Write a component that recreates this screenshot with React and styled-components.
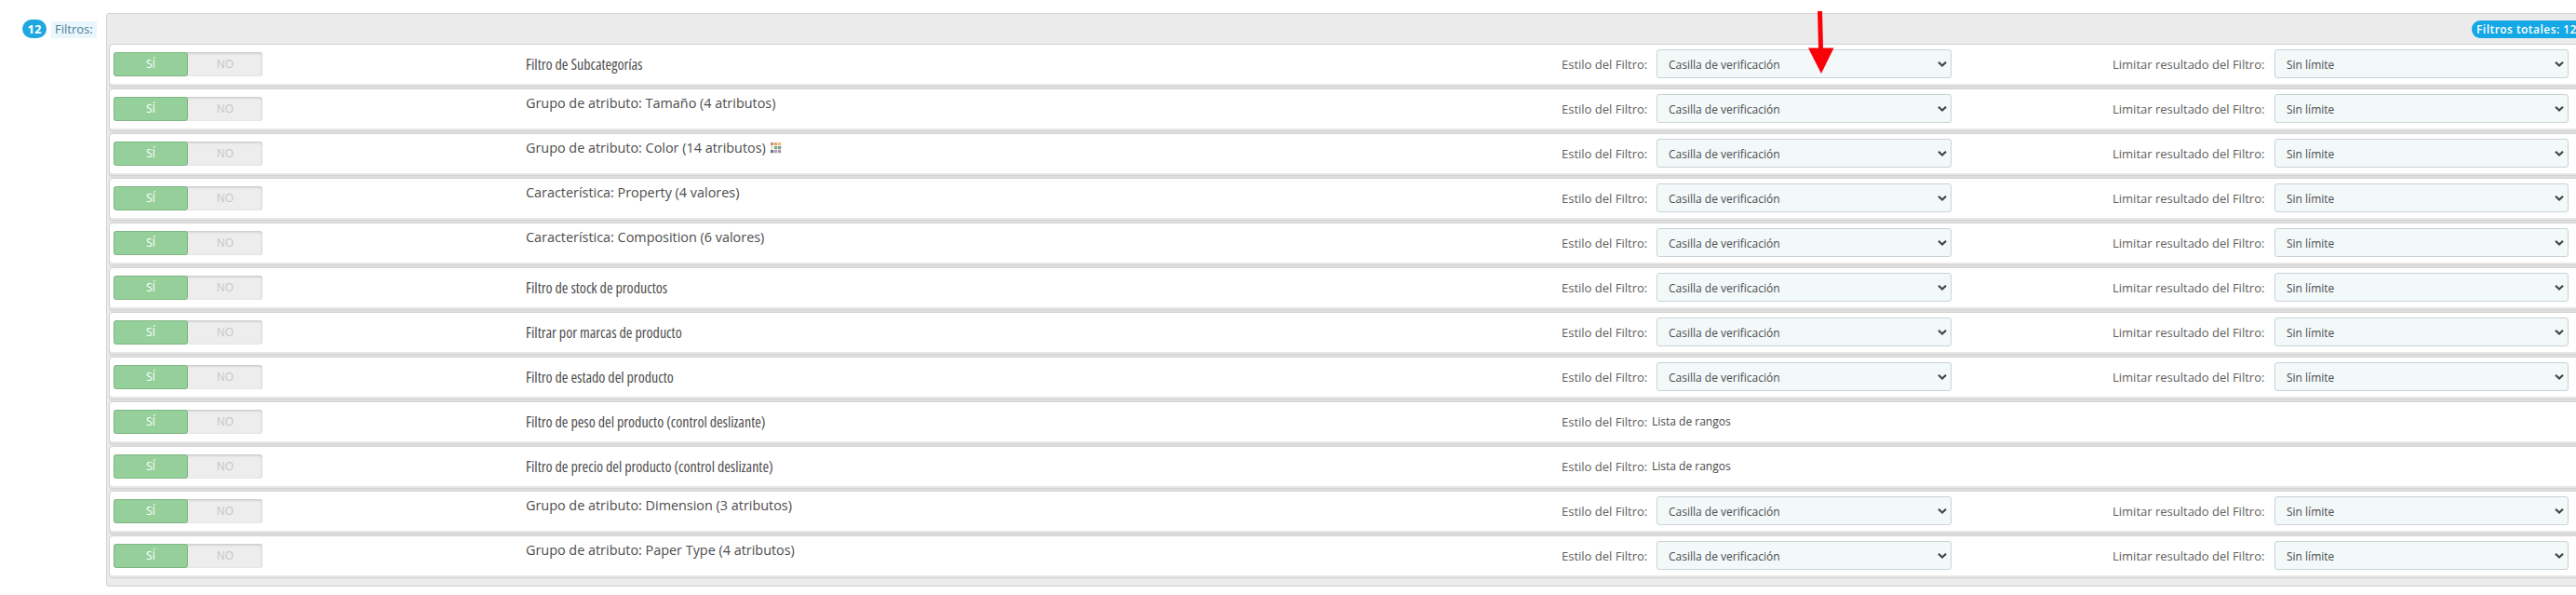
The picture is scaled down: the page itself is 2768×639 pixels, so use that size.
import React from 'react';
import styled, { createGlobalStyle } from 'styled-components';

const filters = [
   { name: "Filtro de Subcategorías", condensed: true },
   { name: "Grupo de atributo: Tamaño (4 atributos)" },
   { name: "Grupo de atributo: Color (14 atributos)", swatches: true },
   { name: "Característica: Property (4 valores)" },
   { name: "Característica: Composition (6 valores)" },
   { name: "Filtro de stock de productos", condensed: true },
   { name: "Filtrar por marcas de producto", condensed: true },
   { name: "Filtro de estado del producto", condensed: true },
   { name: "Filtro de peso del producto (control deslizante)", condensed: true, range: true },
   { name: "Filtro de precio del producto (control deslizante)", condensed: true, range: true },
   { name: "Grupo de atributo: Dimension (3 atributos)" },
   { name: "Grupo de atributo: Paper Type (4 atributos)" },
];

const swatchColors = [
   "#c98a80", "#e0a860", "#e6c474",
   "#e6e9c4", "#7fa68c", "#7c9c92",
   "#5f7488", "#b59ab8", "#b58fa6",
];

const Swatches = () => (
   <SwatchIcon width="12" height="12" viewBox="0 0 12 12">
      {swatchColors.map((color, i) => (
         <rect key={i} x={(i % 3) * 4} y={Math.floor(i / 3) * 4} width="3.2" height="3.2" fill={color} />
      ))}
   </SwatchIcon>
)

const SelectBox = ({ width, children }) => (
   <Select $width={width}>
      <SelectText>{children}</SelectText>
      <svg width="10" height="8" viewBox="0 0 10 8">
         <path d="M1 1.8 L5 5.6 L9 1.8" fill="none" stroke="#444" strokeWidth="2.2" />
      </svg>
   </Select>
)

const FilterRow = ({ filter }) => (
   <Row>
      <Switch>
         <SwitchOption $on>SÍ</SwitchOption>
         <SwitchOption>NO</SwitchOption>
      </Switch>
      <Name $condensed={filter.condensed}>
         {filter.name}
         {filter.swatches && <Swatches />}
      </Name>
      <Field $width={592}>
         <Label $width={102}>Estilo del Filtro:</Label>
         {filter.range
            ? <RangeText>Lista de rangos</RangeText>
            : <SelectBox width={317}>Casilla de verificación</SelectBox>}
      </Field>
      {!filter.range && (
         <Field $width={500}>
            <Label $width={174}>Limitar resultado del Filtro:</Label>
            <SelectBox width={316}>Sin límite</SelectBox>
         </Field>
      )}
   </Row>
)

const App = () => {
   return (
      <Page>
         <GlobalStyle />
         <Side>
            <Count>12</Count>
            <SideLabel>Filtros:</SideLabel>
         </Side>
         <Panel>
            <PanelHeader>
               <Total>Filtros totales: 12</Total>
            </PanelHeader>
            {filters.map((filter) => (
               <FilterRow key={filter.name} filter={filter} />
            ))}
         </Panel>
         <Pointer width="30" height="70" viewBox="0 0 30 70">
            <path d="M11 2 H16 L17 41.5 H28.5 L15 69 L1 41.5 H12 Z" fill="#fb0007" />
         </Pointer>
      </Page>
   )
}

const GlobalStyle = createGlobalStyle`
   * {
      box-sizing: border-box;
   }
   body {
      margin: 0;
      background: #fff;
      overflow: hidden;
   }
`

const Page = styled.div`
   position: relative;
   display: flex;
   align-items: flex-start;
   width: 2768px;
   height: 639px;
   padding-top: 14px;
   overflow: hidden;
   font-family: "Open Sans", "Noto Sans", sans-serif;
   font-size: 12px;
   color: #555;
`

const Side = styled.div`
   display: flex;
   flex: none;
   align-items: center;
   gap: 5px;
   width: 114px;
   padding: 7px 0 0 24px;
`

const Count = styled.span`
   width: 26px;
   height: 20px;
   border-radius: 10px;
   background: #1fa7e0;
   color: #fff;
   font-size: 13px;
   font-weight: 700;
   line-height: 20px;
   text-align: center;
`

const SideLabel = styled.span`
   width: 49px;
   height: 18px;
   margin-top: 1px;
   padding-left: 4px;
   background: #e9f6fd;
   color: #4a8096;
   font-size: 13px;
   line-height: 17px;
`

const Panel = styled.div`
   flex: none;
   width: 2670px;
   height: 616px;
   padding-left: 2px;
   border: 1px solid #d2d2d2;
   border-radius: 3px;
   background: #ebebeb;
`

const PanelHeader = styled.div`
   display: flex;
   height: 32px;
   padding: 7px 0 0 2539px;
`

const Total = styled.span`
   flex: none;
   height: 19px;
   padding: 0 8px 0 5px;
   border-radius: 9px;
   background: #14a8e6;
   color: #fff;
   font-weight: 600;
   letter-spacing: 0.45px;
   line-height: 19px;
   white-space: nowrap;
`

const Row = styled.div`
   display: flex;
   height: 46px;
   margin-bottom: 2px;
   padding-left: 4px;
   border: 1px solid #d2d2d2;
   border-radius: 4px;
   background: #fff;
   box-shadow: inset 0 -2px 0 #e7e7e7, 0 2px 0 #dedede;

   &:last-child {
      margin-bottom: 0;
      box-shadow: inset 0 -2px 0 #e7e7e7;
   }
`

const Switch = styled.div`
   display: flex;
   flex: none;
   width: 160px;
   height: 26px;
   margin: 8px 283px 0 0;
   border-radius: 3px;
   background: #ededed;
   box-shadow: inset 0 1px 3px rgba(0, 0, 0, 0.2);
`

const SwitchOption = styled.span`
   width: 80px;
   height: 26px;
   border: 1px solid ${({ $on }) => ($on ? "#80b585" : "transparent")};
   border-radius: 3px;
   background: ${({ $on }) => ($on ? "#95d09a" : "transparent")};
   color: ${({ $on }) => ($on ? "#fff" : "#c6c6c6")};
   line-height: 23px;
   text-align: center;
`

const Name = styled.div`
   flex: none;
   width: 1113px;
   font-size: ${({ $condensed }) => ($condensed ? "16px" : "14.4px")};
   font-stretch: ${({ $condensed }) => ($condensed ? "75%" : "100%")};
   line-height: 20px;
   padding-top: ${({ $condensed }) => ($condensed ? "11px" : "5px")};
   color: #4d4d4d;
   white-space: nowrap;
`

const SwatchIcon = styled.svg`
   margin-left: 5px;
   vertical-align: -1px;
`

const Field = styled.div`
   display: flex;
   flex: none;
   width: ${({ $width }) => $width}px;
`

const Label = styled.span`
   flex: none;
   width: ${({ $width }) => $width}px;
   padding-top: 11px;
   color: #5e5e5e;
   font-size: 13px;
   line-height: 20px;
   white-space: nowrap;
`

const Select = styled.div`
   display: flex;
   flex: none;
   align-items: center;
   justify-content: space-between;
   width: ${({ $width }) => $width}px;
   height: 31px;
   margin-top: 5px;
   padding: 0 4px 0 12px;
   border: 1px solid #c7d3d8;
   border-radius: 3px;
   background: #f3f8f9;
   color: #484d4f;
`

const SelectText = styled.span`
   padding-top: 2px;
   line-height: 27px;
`

const RangeText = styled.span`
   margin-left: -5px;
   padding-top: 12px;
   color: #484848;
   line-height: 18px;
`

/* hand-drawn arrow lying over the first row */
const Pointer = styled.svg`
   position: absolute;
   top: 10px;
   left: 1942px;
`

export default App;
